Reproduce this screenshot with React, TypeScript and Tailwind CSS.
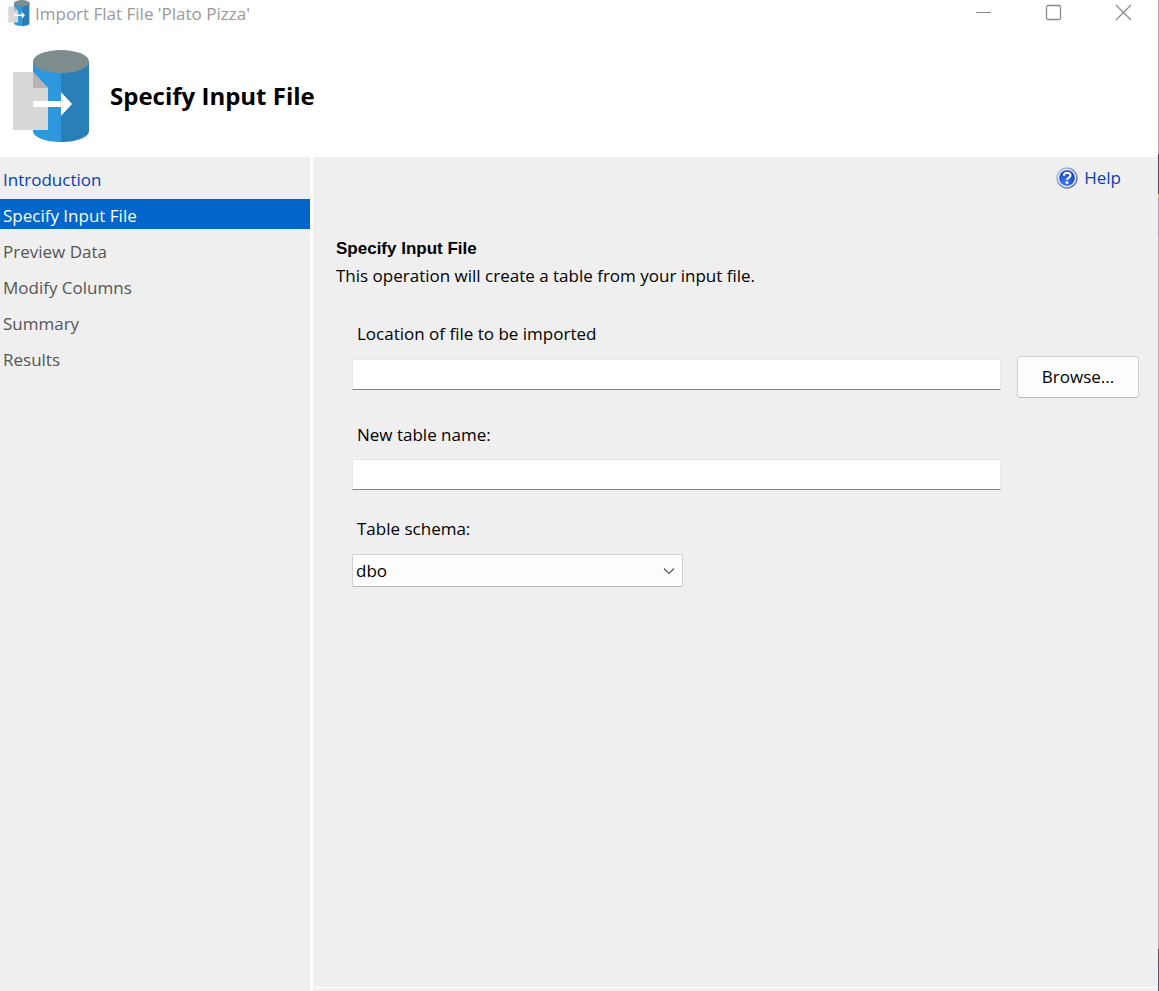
import { useId } from "react";

function DatabaseImportIcon({ className }: { className: string }) {
  const id = useId();
  return (
    <svg viewBox="0 0 78 92" className={className} aria-hidden="true">
      <defs>
        <clipPath id={id}>
          <path d="M21 11V81C21 87 33 92 49 92S77 87 77 81V11Z" />
        </clipPath>
      </defs>
      <g clipPath={`url(#${id})`}>
        <rect x="21" y="10" width="28" height="82" fill="#2e97de" />
        <rect x="49" y="10" width="28" height="82" fill="#2980b9" />
      </g>
      <ellipse cx="49" cy="11.5" rx="28" ry="11.5" fill="#7f8c8d" />
      <path d="M1 22H21L36 38V80H1Z" fill="#d8d8d8" />
      <path d="M21 22L36 38H21Z" fill="#b5b5b5" />
      <path d="M21 51H49V42L60 54L49 66V57H21Z" fill="#fff" />
    </svg>
  );
}

function HelpIcon() {
  return (
    <svg viewBox="0 0 22 22" className="size-[22px]" aria-hidden="true">
      <defs>
        <radialGradient id="help-ball" cx="40%" cy="75%" r="75%">
          <stop offset="0" stopColor="#3f7cf5" />
          <stop offset="0.6" stopColor="#2456d8" />
          <stop offset="1" stopColor="#1c3fae" />
        </radialGradient>
        <linearGradient id="help-ring" x1="0" y1="0" x2="1" y2="1">
          <stop offset="0" stopColor="#b9cbea" />
          <stop offset="1" stopColor="#4a6296" />
        </linearGradient>
      </defs>
      <circle cx="11" cy="11" r="10" fill="#dfe8f8" stroke="url(#help-ring)" strokeWidth="1.4" />
      <circle cx="11" cy="11" r="7.8" fill="url(#help-ball)" />
      <path
        d="M7.8 8.8C7.9 6.7 9.3 5.8 11.2 5.8C13.2 5.8 14.5 6.9 14.5 8.5C14.5 10.6 11.3 10.8 11.1 13"
        fill="none"
        stroke="#fff"
        strokeWidth="2.1"
      />
      <circle cx="11" cy="15.7" r="1.4" fill="#fff" />
    </svg>
  );
}

const steps = [
  { label: "Introduction", style: "text-[#0a3cb4]" },
  { label: "Specify Input File", style: "bg-[#0066cc] text-white", current: true },
  { label: "Preview Data", style: "text-[#555555]" },
  { label: "Modify Columns", style: "text-[#555555]" },
  { label: "Summary", style: "text-[#555555]" },
  { label: "Results", style: "text-[#555555]" },
];

const textBox =
  "block h-[31px] w-full border border-[#e8e8e8] border-b-[#858585] bg-white px-1 outline-none";

export default function App() {
  return (
    <div className="flex min-h-screen bg-white font-['Open_Sans','Noto_Sans',sans-serif] text-[17px] leading-6 text-black">
      <div className="flex min-w-0 grow flex-col">
        <header>
          <div className="flex h-7 items-start justify-between pr-[26px] pl-[7px]">
            <div className="flex items-center gap-1 text-[#999999]">
              <DatabaseImportIcon className="h-[26px] w-6" />
              <span className="pt-[2px]">Import Flat File 'Plato Pizza'</span>
            </div>
            <div className="flex gap-[53px] pt-1 text-[#8c8c8c]">
              <button type="button" aria-label="Minimize">
                <svg viewBox="0 0 17 17" className="size-[17px]" fill="none" stroke="currentColor">
                  <path d="M1 8.5H16" />
                </svg>
              </button>
              <button type="button" aria-label="Maximize">
                <svg viewBox="0 0 17 17" className="size-[17px]" fill="none" stroke="currentColor" strokeWidth="1.3">
                  <rect x="1.5" y="1.5" width="14" height="14" rx="1.5" />
                </svg>
              </button>
              <button type="button" aria-label="Close">
                <svg viewBox="0 0 17 17" className="size-[17px]" fill="none" stroke="currentColor" strokeWidth="1.3">
                  <path d="M1 1L16 16M16 1L1 16" />
                </svg>
              </button>
            </div>
          </div>
          <div className="flex items-center gap-5 px-3 pt-[22px] pb-[15px]">
            <DatabaseImportIcon className="h-[92px] w-[78px]" />
            <h1 className="text-[24px] font-bold">Specify Input File</h1>
          </div>
        </header>

        <div className="flex grow gap-[3px]">
          <nav className="w-[310px] shrink-0 bg-[#efefef] pt-[6px]">
            <ul className="flex flex-col gap-[6px]">
              {steps.map((step) => (
                <li key={step.label}>
                  <a
                    href="#"
                    aria-current={step.current ? "step" : undefined}
                    className={`block px-[3px] pt-[5px] pb-px ${step.style}`}
                  >
                    {step.label}
                  </a>
                </li>
              ))}
            </ul>
          </nav>

          <div className="flex min-w-0 grow flex-col gap-[1px]">
            <main className="grow bg-[#efefef] pt-[9px] pr-[19px] pl-[23px]">
              <div className="flex justify-end pr-[18px]">
                <a href="#" className="flex items-center gap-[6px] text-[#0a3cb4]">
                  <HelpIcon />
                  Help
                </a>
              </div>

              <h2 className="mt-[47px] font-['Liberation_Sans',sans-serif] text-[17px] font-bold">
                Specify Input File
              </h2>
              <p className="mt-[3px]">This operation will create a table from your input file.</p>

              <form className="pl-4" onSubmit={(e) => e.preventDefault()}>
                <label htmlFor="location" className="mt-[34px] block pl-[5px]">
                  Location of file to be imported
                </label>
                <div className="mt-[10px] flex gap-4">
                  <div className="grow pt-[3px]">
                    <input id="location" type="text" className={textBox} />
                  </div>
                  <button
                    type="button"
                    className="h-[42px] w-[122px] shrink-0 rounded border border-[#d0d0d0] border-b-[#bbbbbb] bg-[#fdfdfd]"
                  >
                    Browse...
                  </button>
                </div>

                <div className="pr-[138px]">
                  <label htmlFor="table-name" className="mt-[25px] block pl-[5px]">
                    New table name:
                  </label>
                  <input id="table-name" type="text" className={`mt-3 ${textBox}`} />
                </div>

                <label htmlFor="schema" className="mt-[27px] block pl-[5px]">
                  Table schema:
                </label>
                <div className="mt-[13px] grid w-[331px] items-center">
                  <select
                    id="schema"
                    defaultValue="dbo"
                    className="col-start-1 row-start-1 h-[33px] appearance-none rounded-xs border border-[#d0d0d0] border-b-[#bbbbbb] bg-[#fdfdfd] px-[3px] outline-none"
                  >
                    <option value="dbo">dbo</option>
                  </select>
                  <svg
                    viewBox="0 0 12 8"
                    className="pointer-events-none col-start-1 row-start-1 mr-2 h-2 w-3 justify-self-end"
                    fill="none"
                    stroke="#555555"
                    strokeWidth="1.2"
                    aria-hidden="true"
                  >
                    <path d="M1 1.5L6 6.5L11 1.5" />
                  </svg>
                </div>
              </form>
            </main>
            <div className="h-[3px] bg-[#efefef]" />
          </div>
        </div>
      </div>

      <div className="flex w-px shrink-0 flex-col">
        <div className="h-[154px] bg-[#a9abb5]" />
        <div className="h-10 bg-[#454a58]" />
        <div className="h-[3px] bg-[#d8c860]" />
        <div className="h-10 bg-[#a0a3ad]" />
        <div className="grow bg-[#b0b0b0]" />
        <div className="h-3 bg-[#505058]" />
        <div className="h-[30px] bg-[#2a6a90]" />
      </div>
    </div>
  );
}
